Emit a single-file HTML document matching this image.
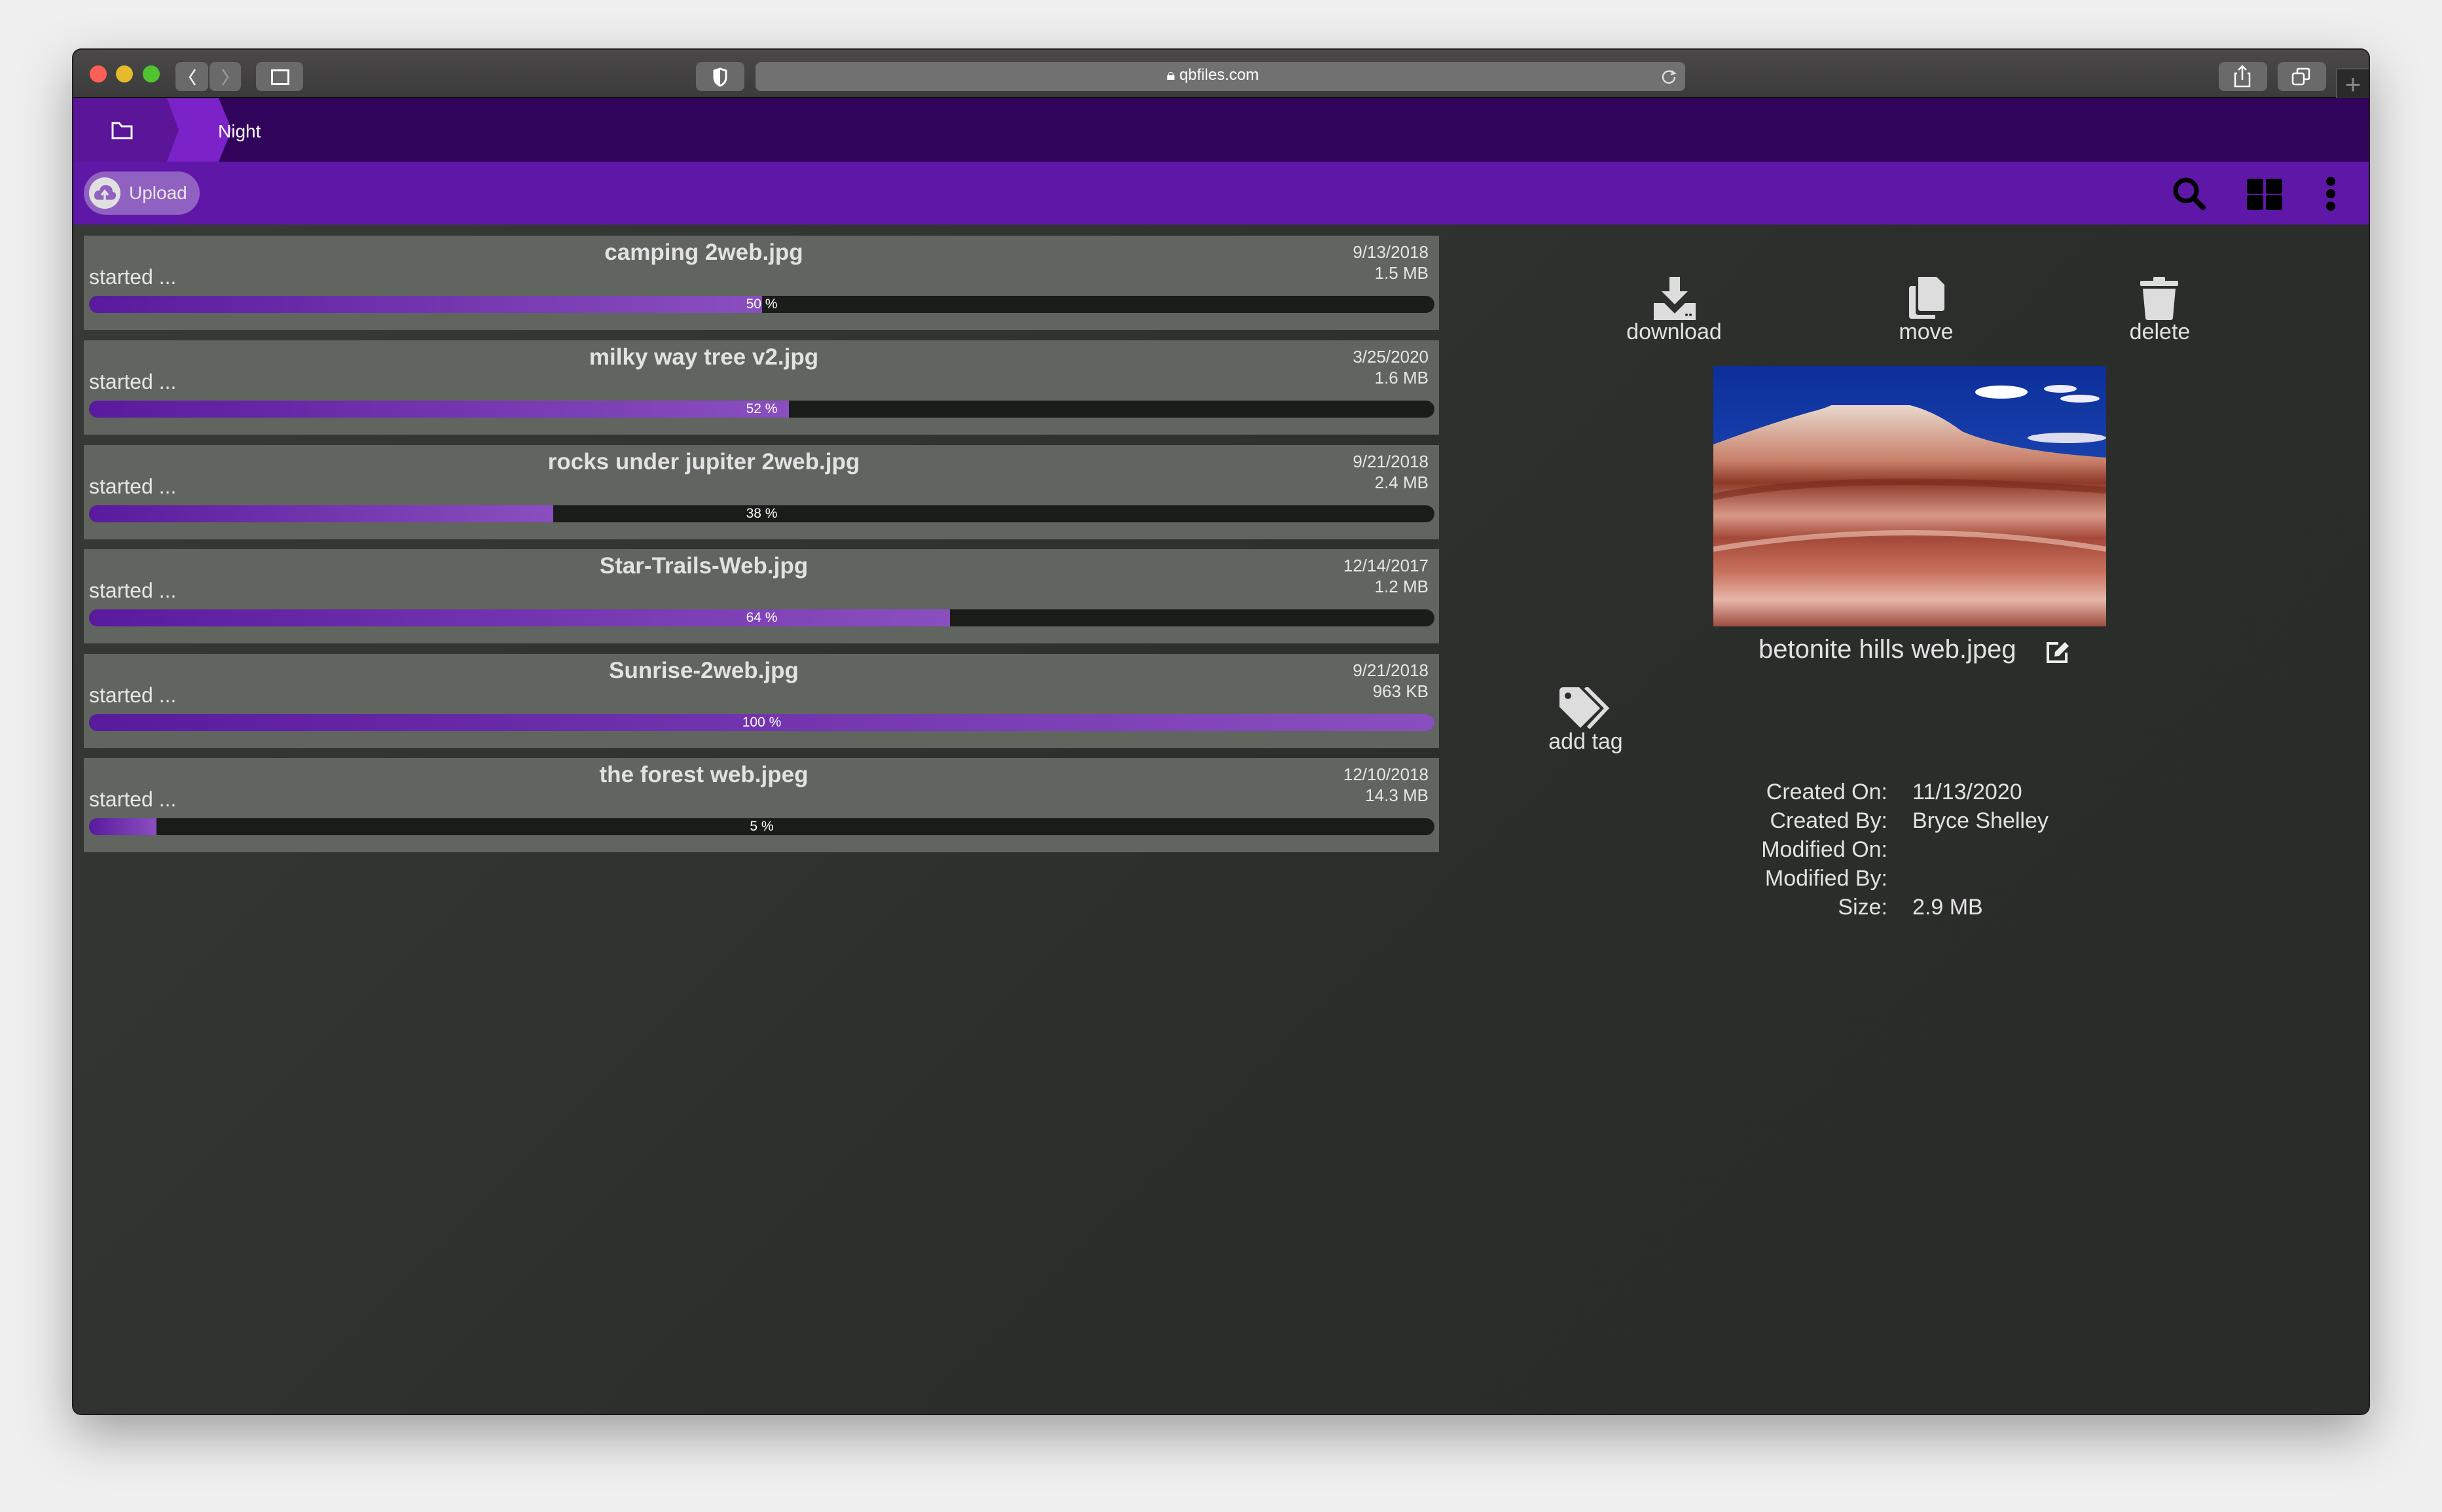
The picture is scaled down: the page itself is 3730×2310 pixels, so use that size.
<!DOCTYPE html>
<html><head><meta charset="utf-8"><style>
*{margin:0;padding:0;box-sizing:border-box}
body{width:3730px;height:2310px;background:#efefef;position:relative;overflow:hidden;font-family:"Liberation Sans",sans-serif}
.win{position:absolute;left:112px;top:76px;width:3506px;height:2084px;border-radius:12px;overflow:hidden;background:#2d2f2d;box-shadow:0 30px 80px rgba(0,0,0,.35),0 0 0 2px #222}
.tb{position:absolute;left:0;top:0;width:100%;height:74px;background:linear-gradient(#4a4848,#3c3b3b);border-bottom:2px solid #111}
.dot{position:absolute;top:24px;width:26px;height:26px;border-radius:50%}
.btn{position:absolute;top:19px;height:44px;background:#6b6a6a;border-radius:8px}
.abs{position:absolute}
.bc{position:absolute;left:0;top:74px;width:100%;height:97px;background:#30045a}
.tool{position:absolute;left:0;top:171px;width:100%;height:96px;background:#5f17a8}
.content{position:absolute;left:0;top:267px;width:100%;height:1817px;background:linear-gradient(135deg,#383a38,#2b2d2b 60%,#2a2c2a)}
.row{position:absolute;left:16px;width:2070px;height:144px;background:#616560}
.row .t{position:absolute;left:0;width:calc(100% - 176px);top:6px;text-align:center;font-weight:bold;font-size:35px;color:#e2e2e2}
.row .d{position:absolute;right:16px;top:9px;text-align:right;font-size:26px;line-height:32px;color:#e6e6e6}
.row .s{position:absolute;left:8px;top:45px;font-size:32px;color:#e6e6e6}
.row .bar{position:absolute;left:8px;top:92px;width:2055px;height:26px;border-radius:13px;background:#1a1c1a;overflow:hidden}
.row .f{position:absolute;left:0;top:0;height:100%;border-radius:13px 0 0 13px;background:linear-gradient(90deg,#5a1a9e,#8a4fbf)}
.row .p{position:absolute;left:0;width:100%;top:0;line-height:26px;text-align:center;font-size:21px;color:#fff}
.lbl{position:absolute;font-size:34px;color:#e2e2e2;text-align:center}
.k{position:absolute;font-size:34px;color:#e2e2e2;line-height:44px}
</style></head><body>
<div class="win">
 <div class="tb">
  <div class="dot" style="left:25px;background:#fe5f57"></div>
  <div class="dot" style="left:65px;background:#e6bb2b"></div>
  <div class="dot" style="left:106px;background:#4fc330"></div>
  <div class="btn" style="left:156px;width:50px"></div><div class="btn" style="left:208px;width:48px"></div>
  <svg class="abs" style="left:170px;top:28px" width="24" height="28"><path d="M16 2 L8 14 L16 26" stroke="#eee" stroke-width="2.5" fill="none"/></svg>
  <svg class="abs" style="left:220px;top:28px" width="24" height="28"><path d="M8 2 L16 14 L8 26" stroke="#999" stroke-width="2.5" fill="none"/></svg>
  <div class="btn" style="left:279px;width:72px"></div>
  <div class="abs" style="left:302px;top:30px;width:28px;height:24px;border:3px solid #fff"></div>
  <div class="btn" style="left:951px;width:74px"></div>
  <svg class="abs" style="left:976px;top:27px" width="24" height="30"><path d="M12 2 L21 5 V15 Q21 24 12 28 Q3 24 3 15 V5Z" fill="none" stroke="#fff" stroke-width="3"/><path d="M12 3 V27 Q4 23 4 15 V6Z" fill="#fff"/></svg>
  <div class="btn" style="left:1042px;width:1420px;background:#727171"></div>
  <div class="abs" style="left:1670px;top:25px;font-size:24px;color:#fff">🔒︎ qbfiles.com</div>
  <svg class="abs" style="left:2424px;top:28px" width="26" height="26"><path d="M20 8 A9 9 0 1 0 22 14" fill="none" stroke="#ddd" stroke-width="2.5"/><path d="M17 4 L22 8 L16 10" fill="none" stroke="#ddd" stroke-width="2.5"/></svg>
  <div class="btn" style="left:3277px;width:74px"></div>
  <svg class="abs" style="left:3300px;top:22px" width="26" height="36"><path d="M5 14 H2 V34 H24 V14 H21 M13 24 V3 M7 9 L13 3 L19 9" fill="none" stroke="#fff" stroke-width="2.5"/></svg>
  <div class="btn" style="left:3367px;width:74px"></div>
  <svg class="abs" style="left:3388px;top:26px" width="30" height="30"><rect x="2" y="10" width="17" height="17" rx="3" fill="none" stroke="#fff" stroke-width="2.5"/><path d="M9 9 V5 Q9 3 11 3 H25 Q27 3 27 5 V17 Q27 19 25 19 H20" fill="none" stroke="#fff" stroke-width="2.5"/></svg>
  <div class="abs" style="left:3456px;top:28px;width:50px;height:46px;background:#2a2a2a;border-left:2px solid #555;border-top:2px solid #555;color:#888;font-size:42px;line-height:46px;text-align:center">+</div>
 </div>
 <div class="bc">
  <svg class="abs" width="400" height="97"><path d="M0 0 H173 L190 48 L173 97 H0Z" fill="#5a1599"/><path d="M143 0 H222 L242 48 L222 97 H143 L161 48Z" fill="#7b22c9"/></svg>
  <svg class="abs" style="left:58px;top:36px" width="34" height="28"><path d="M2 2 H12 L16 7 H31 V25 H2Z" fill="none" stroke="#fff" stroke-width="3"/></svg>
  <div class="abs" style="left:221px;top:35px;font-size:28px;color:#fff">Night</div>
 </div>
 <div class="tool">
  <div class="abs" style="left:16px;top:15px;width:177px;height:66px;border-radius:33px;background:#9161c2"></div>
  <svg class="abs" style="left:22px;top:22px" width="52" height="52"><circle cx="26" cy="26" r="24" fill="#e0e0e0"/><path d="M10 30 Q10 22 18 22 Q20 13 29 14 Q38 15 38 24 Q44 25 43 31 Q42 36 36 36 H16 Q10 36 10 30Z" fill="#9161c2"/><path d="M26 36 V24 M21 29 L26 23 L31 29" stroke="#e0e0e0" stroke-width="3.5" fill="none"/></svg>
  <div class="abs" style="left:85px;top:32px;font-size:28px;color:#e8e8e8">Upload</div>
  <svg class="abs" style="left:3203px;top:20px" width="60" height="60"><circle cx="24" cy="24" r="16" fill="none" stroke="#000" stroke-width="7"/><path d="M36 36 L50 50" stroke="#000" stroke-width="8" stroke-linecap="round"/></svg>
  <svg class="abs" style="left:3320px;top:26px" width="56" height="48"><rect x="0" y="0" width="25" height="23" rx="3"/><rect x="29" y="0" width="25" height="23" rx="3"/><rect x="0" y="25" width="25" height="23" rx="3"/><rect x="29" y="25" width="25" height="23" rx="3"/></svg>
  <svg class="abs" style="left:3433px;top:22px" width="30" height="56"><circle cx="15" cy="8" r="7"/><circle cx="15" cy="27" r="7"/><circle cx="15" cy="46" r="7"/></svg>
 </div>
 <div class="content">
  <div class="row" style="top:17px"><div class="t">camping 2web.jpg</div><div class="d">9/13/2018<br>1.5 MB</div><div class="s">started ...</div><div class="bar"><div class="f" style="width:50%"></div><div class="p">50 %</div></div></div>
  <div class="row" style="top:177px"><div class="t">milky way tree v2.jpg</div><div class="d">3/25/2020<br>1.6 MB</div><div class="s">started ...</div><div class="bar"><div class="f" style="width:52%"></div><div class="p">52 %</div></div></div>
  <div class="row" style="top:337px"><div class="t">rocks under jupiter 2web.jpg</div><div class="d">9/21/2018<br>2.4 MB</div><div class="s">started ...</div><div class="bar"><div class="f" style="width:34.5%"></div><div class="p">38 %</div></div></div>
  <div class="row" style="top:496px"><div class="t">Star-Trails-Web.jpg</div><div class="d">12/14/2017<br>1.2 MB</div><div class="s">started ...</div><div class="bar"><div class="f" style="width:64%"></div><div class="p">64 %</div></div></div>
  <div class="row" style="top:656px"><div class="t">Sunrise-2web.jpg</div><div class="d">9/21/2018<br>963 KB</div><div class="s">started ...</div><div class="bar"><div class="f" style="width:100%;border-radius:13px"></div><div class="p">100 %</div></div></div>
  <div class="row" style="top:815px"><div class="t">the forest web.jpeg</div><div class="d">12/10/2018<br>14.3 MB</div><div class="s">started ...</div><div class="bar"><div class="f" style="width:5%"></div><div class="p">5 %</div></div></div>

  <svg class="abs" style="left:2414px;top:80px" width="64" height="66"><path d="M24 0 H40 V22 H52 L32 42 L12 22 H24Z" fill="#ddd"/><path d="M0 40 H16 L32 56 L48 40 H64 V66 H0Z" fill="#ddd"/><circle cx="50" cy="58" r="2" fill="#2d2f2d"/><circle cx="56" cy="58" r="2" fill="#2d2f2d"/></svg>
  <div class="lbl" style="left:2345px;top:145px;width:200px">download</div>
  <svg class="abs" style="left:2800px;top:80px" width="60" height="66"><path d="M18 0 H46 L58 12 V48 Q58 52 54 52 H22 Q18 52 18 48Z" fill="#ddd"/><path d="M14 14 V54 Q14 58 18 58 H44 V64 H8 Q4 64 4 60 V18 Q4 14 8 14Z" fill="#ddd"/></svg>
  <div class="lbl" style="left:2730px;top:145px;width:200px">move</div>
  <svg class="abs" style="left:3157px;top:80px" width="60" height="66"><rect x="0" y="6" width="58" height="8" rx="2" fill="#ddd"/><rect x="20" y="0" width="18" height="8" rx="2" fill="#ddd"/><path d="M4 18 H54 L50 62 Q50 66 46 66 H12 Q8 66 8 62Z" fill="#ddd"/></svg>
  <div class="lbl" style="left:3087px;top:145px;width:200px">delete</div>

  <svg class="abs" style="left:2505px;top:216px" width="600" height="398">
   <defs><linearGradient id="sky" x1="0" y1="0" x2="0" y2="1"><stop offset="0" stop-color="#0d2f9a"/><stop offset="1" stop-color="#2a5fd0"/></linearGradient>
   <linearGradient id="rock" x1="0" y1="0" x2="0" y2="1"><stop offset="0" stop-color="#e8d8cc"/><stop offset=".25" stop-color="#c9806a"/><stop offset=".35" stop-color="#8e3a28"/><stop offset=".5" stop-color="#d99887"/><stop offset=".6" stop-color="#a4493a"/><stop offset=".75" stop-color="#c76f5c"/><stop offset=".88" stop-color="#e7b6a8"/><stop offset="1" stop-color="#9c4c3e"/></linearGradient></defs>
   <rect width="600" height="398" fill="url(#sky)"/>
   <ellipse cx="440" cy="40" rx="40" ry="10" fill="#fff"/><ellipse cx="530" cy="35" rx="25" ry="6" fill="#eef"/><ellipse cx="560" cy="50" rx="30" ry="6" fill="#eef"/><ellipse cx="540" cy="110" rx="60" ry="8" fill="#dde"/>
   <path d="M0 120 Q80 90 150 70 Q170 65 180 60 H300 Q340 70 380 100 Q450 130 600 140 V398 H0Z" fill="url(#rock)"/>
   <path d="M0 200 Q200 160 600 190" stroke="#7a2a1c" stroke-width="10" fill="none" opacity=".6"/>
   <path d="M0 280 Q300 230 600 280" stroke="#f0c8b8" stroke-width="8" fill="none" opacity=".6"/>
  </svg>
  <div class="abs" style="left:2570px;top:624px;font-size:40px;color:#e2e2e2;line-height:50px;padding-left:4px">betonite hills web.jpeg</div>
  <svg class="abs" style="left:3012px;top:634px" width="40" height="40"><path d="M20 6 H4 V34 H32 V20" fill="none" stroke="#eee" stroke-width="4"/><path d="M14 26 L15 19 L30 4 L36 10 L21 25Z" fill="#eee"/></svg>

  <svg class="abs" style="left:2270px;top:707px" width="84" height="70"><path d="M0 6 Q0 0 6 0 H30 L62 32 L32 62 L0 30Z" fill="#ddd"/><circle cx="13" cy="13" r="5" fill="#2d2f2d"/><path d="M40 0 L72 32 L44 62" fill="none" stroke="#ddd" stroke-width="6"/></svg>
  <div class="lbl" style="left:2240px;top:771px;width:140px">add tag</div>

  <div class="k" style="left:2500px;top:845px;width:271px;text-align:right">Created On:<br>Created By:<br>Modified On:<br>Modified By:<br>Size:</div>
  <div class="k" style="left:2809px;top:845px">11/13/2020<br>Bryce Shelley<br><br><br>2.9 MB</div>
 </div>
</div>
</body></html>
